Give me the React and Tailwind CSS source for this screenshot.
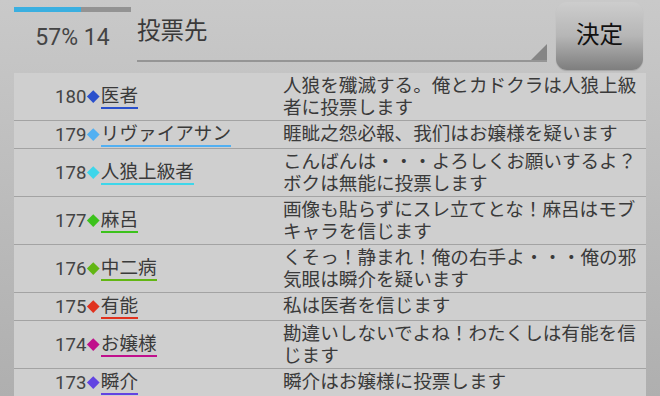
const ROWS = [
    { no: 180, name: '医者', color: '#2a50cc', msg: '人狼を殲滅する。俺とカドクラは人狼上級者に投票します' },
    { no: 179, name: 'リヴァイアサン', color: '#52b0f2', msg: '睚眦之怨必報、我们はお嬢様を疑います' },
    { no: 178, name: '人狼上級者', color: '#3ed6ea', msg: 'こんばんは・・・よろしくお願いするよ？ボクは無能に投票します' },
    { no: 177, name: '麻呂', color: '#3cc21c', msg: '画像も貼らずにスレ立てとな！麻呂はモブキャラを信じます' },
    { no: 176, name: '中二病', color: '#62b614', msg: 'くそっ！静まれ！俺の右手よ・・・俺の邪気眼は瞬介を疑います' },
    { no: 175, name: '有能', color: '#e0321e', msg: '私は医者を信じます' },
    { no: 174, name: 'お嬢様', color: '#c0108c', msg: '勘違いしないでよね！わたくしは有能を信じます' },
    { no: 173, name: '瞬介', color: '#6244e2', msg: '瞬介はお嬢様に投票します' },
];

const VoteRow = ({ row }) => (
    <div className="grid grid-cols-[269px_1fr] border-b border-[#a3a3a3] py-[1.5px]">
        <div className="flex items-center pl-[41px] text-[#444] leading-[22px]">
            <span>{row.no}</span>
            <span className="mx-[3px] w-[8.5px] h-[8.5px] rotate-45" style={{ backgroundColor: row.color }} />
            <span className="flex flex-col">
                <span className="text-[#3a3a3a]">{row.name}</span>
                <span className="h-[2px]" style={{ backgroundColor: row.color }} />
            </span>
        </div>
        <p className="leading-[22px] text-[#3a3a3a]">{row.msg}</p>
    </div>
);

export default function App() {
    return (
        <div
            className="w-[660px] h-[396px] overflow-hidden flex flex-col bg-linear-to-b from-[#c9c9c9] to-[#afafaf] text-[18.6px]"
            style={{ fontFamily: 'Roboto, "Noto Sans CJK JP", sans-serif' }}
        >
            {/* Header */}
            <div className="h-[73px] shrink-0 flex items-start">
                <div className="ml-[14px] w-[117px] pt-[7px] flex flex-col items-center">
                    <div className="w-full h-[5px] bg-[#939393] flex">
                        <div className="w-[57%] h-full bg-[#3aafe0]" />
                    </div>
                    <p className="mt-[14px] text-[23px] leading-none text-[#444]">57% 14</p>
                </div>
                <div className="ml-[6px] w-[410px] h-[62px] relative border-b-2 border-[#959595]">
                    <p className="pt-[20px] text-[23.5px] leading-none text-[#3a3a3a]">投票先</p>
                    <svg className="absolute right-0 bottom-0" width="16" height="16" viewBox="0 0 16 16">
                        <polygon points="16,0 16,16 0,16" fill="#858585" />
                    </svg>
                </div>
                <button className="ml-[9px] mt-[2px] w-[87px] h-[68px] rounded-[11px] bg-linear-to-b from-[#cdcdcd] via-[#b6b6b6] to-[#7e7e7e] text-[23.5px] text-[#111] shadow-[0_1px_1px_rgba(0,0,0,0.15)]">
                    決定
                </button>
            </div>

            {/* Vote list */}
            <div className="mx-[14px] flex-1 bg-[#cfcfcf]">
                {ROWS.map((row) => (
                    <VoteRow key={row.no} row={row} />
                ))}
            </div>
        </div>
    );
}
